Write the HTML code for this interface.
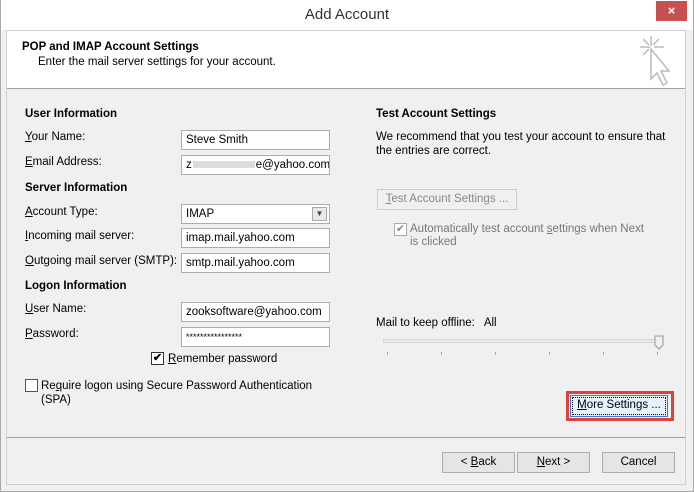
<!DOCTYPE html><html><head><style>
*{margin:0;padding:0;box-sizing:border-box}
body{width:694px;height:492px;background:#fff;font-family:"Liberation Sans",sans-serif;font-size:11.5px;color:#000;position:relative;overflow:hidden}
.a{position:absolute;white-space:nowrap}
.b{font-weight:bold}
.in{position:absolute;background:#fff;border:1px solid #acacac;height:20px;padding:0 4px;line-height:18px;font-size:11.5px;white-space:nowrap;overflow:hidden}
.btn{position:absolute;background:#e5e5e5;border:1px solid #acacac;height:21px;text-align:center;line-height:19px}
.cb{position:absolute;width:13px;height:13px;border:1px solid #333;background:#fff}
u{text-decoration:underline}
</style></head><body>
<div class="a" style="left:0;top:0;width:694px;height:492px;border:1px solid #a9a9a9;border-top:none;background:#f0f0f0"></div>
<div class="a" style="top:0;left:1px;width:692px;height:30px;background:#fff"></div>
<div class="a" style="left:0;top:6px;width:694px;text-align:center;font-size:15px;color:#333">Add Account</div>
<div class="a" style="left:656px;top:1px;width:31px;height:20px;background:#c75050;color:#fff;text-align:center;font-weight:bold;font-size:13px;line-height:19px">×</div>
<div class="a" style="left:6px;top:30px;width:680px;height:455px;border:1px solid #d0d0d0;background:#f0f0f0"></div>
<div class="a" style="left:7px;top:31px;width:678px;height:58px;background:#fff;border-bottom:1px solid #a0a0a0"></div>
<div class="a b" style="left:22px;top:41px">POP and IMAP Account Settings</div>
<div class="a" style="left:38px;top:56px">Enter the mail server settings for your account.</div>
<svg class="a" style="left:636px;top:35px" width="40" height="52" viewBox="0 0 40 52" fill="none" stroke="#bbb" stroke-width="1.5">
<path d="M15 1v10M4 12h10M18 12h10M7 4l6 6M23 4l-6 6M7 20l6-6"/>
<path d="M15 14l18 22h-8l6 12-4 2-6-12-6 6z"/></svg>
<div class="a b" style="left:25px;top:108px">User Information</div>
<div class="a" style="left:25px;top:131px"><u>Y</u>our Name:</div>
<div class="in" style="left:181px;top:130px;width:149px">Steve Smith</div>
<div class="a" style="left:25px;top:156px"><u>E</u>mail Address:</div>
<div class="in" style="left:181px;top:155px;width:149px">z<span style="display:inline-block;width:62px;height:7px;background:#ddd;vertical-align:middle;margin:0 1px"></span>e@yahoo.com</div>
<div class="a b" style="left:25px;top:182px">Server Information</div>
<div class="a" style="left:25px;top:206px"><u>A</u>ccount Type:</div>
<div class="in" style="left:181px;top:204px;width:149px">IMAP<div style="position:absolute;right:2px;top:2px;width:15px;height:14px;border:1px solid #aaa;background:#e8e8e8;font-size:8px;text-align:center;line-height:12px;color:#444">▼</div></div>
<div class="a" style="left:25px;top:230px"><u>I</u>ncoming mail server:</div>
<div class="in" style="left:181px;top:228px;width:149px">imap.mail.yahoo.com</div>
<div class="a" style="left:25px;top:255px"><u>O</u>utgoing mail server (SMTP):</div>
<div class="in" style="left:181px;top:253px;width:149px">smtp.mail.yahoo.com</div>
<div class="a b" style="left:25px;top:280px">Logon Information</div>
<div class="a" style="left:25px;top:303px"><u>U</u>ser Name:</div>
<div class="in" style="left:181px;top:302px;width:149px">zooksoftware@yahoo.com</div>
<div class="a" style="left:25px;top:328px"><u>P</u>assword:</div>
<div class="in" style="left:181px;top:327px;width:149px;font-size:9px;line-height:19px">****************</div>
<div class="cb" style="left:151px;top:352px;font-size:11px;line-height:11px;text-align:center;font-weight:bold">✔</div>
<div class="a" style="left:168px;top:353px"><u>R</u>emember password</div>
<div class="cb" style="left:25px;top:379px;border-color:#555"></div>
<div class="a" style="left:41px;top:380px">Re<u>q</u>uire logon using Secure Password Authentication</div>
<div class="a" style="left:41px;top:394px">(SPA)</div>
<div class="a b" style="left:376px;top:108px">Test Account Settings</div>
<div class="a" style="left:376px;top:131px">We recommend that you test your account to ensure that</div>
<div class="a" style="left:376px;top:145px">the entries are correct.</div>
<div class="btn" style="left:377px;top:189px;width:140px;background:#f0f0f0;border-color:#ccc;color:#888"><u>T</u>est Account Settings ...</div>
<div class="cb" style="left:394px;top:223px;border-color:#aaa;color:#888;font-size:11px;line-height:11px;text-align:center">✔</div>
<div class="a" style="left:410px;top:223px;color:#777">Automatically test account <u>s</u>ettings when Next</div>
<div class="a" style="left:410px;top:236px;color:#777">is clicked</div>
<div class="a" style="left:376px;top:317px">Mail to keep offline:&nbsp;&nbsp; All</div>
<div class="a" style="left:383px;top:339px;width:274px;height:4px;border:1px solid #d6d6d6;background:#e7e7e7"></div>
<svg class="a" style="left:654px;top:335px" width="10" height="15"><path d="M1 1h8v9l-4 4-4-4z" fill="#f0f0f0" stroke="#999"/></svg>
<div class="a" style="left:387px;top:352px;width:272px;height:3px;background:repeating-linear-gradient(90deg,#aaa 0 1px,transparent 1px 54px)"></div>
<div class="a" style="left:566px;top:391px;width:108px;height:30px;border:3px solid #e04040"></div>
<div class="btn" style="left:570px;top:395px;width:98px;height:22px;border:1px solid #3c7fd0;background:#e5f1fb;outline:1px dotted #000;outline-offset:-3px"><u>M</u>ore Settings ...</div>
<div class="a" style="left:7px;top:437px;width:678px;height:1px;background:#a0a0a0"></div>
<div class="btn" style="left:442px;top:452px;width:73px">&lt; <u>B</u>ack</div>
<div class="btn" style="left:517px;top:452px;width:73px"><u>N</u>ext &gt;</div>
<div class="btn" style="left:602px;top:452px;width:73px">Cancel</div>
</body></html>
